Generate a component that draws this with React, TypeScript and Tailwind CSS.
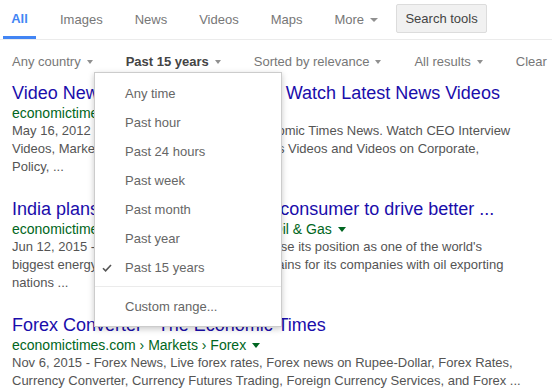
const tabs = ["Images", "News", "Videos", "Maps"];

const ranges = [
  "Any time",
  "Past hour",
  "Past 24 hours",
  "Past week",
  "Past month",
  "Past year",
  "Past 15 years",
];

function Caret({ className = "border-l-[3px] border-r-[3px] border-t-[4px] border-t-[#909090]" }: { className?: string }) {
  return (
    <span className={`inline-block w-0 h-0 border-l-transparent border-r-transparent ${className}`} />
  );
}

function Result({
  title,
  url,
  lines,
}: {
  title: string;
  url: string;
  lines: string[];
}) {
  return (
    <div className="mb-[23px]">
      <div className="text-[18px] leading-[21px] text-[#1a0dab] whitespace-nowrap">{title}</div>
      <div className="text-[14px] leading-[18px] text-[#006621] whitespace-nowrap flex items-center gap-[6px]">
        <span>{url}</span>
        <Caret className="border-t-[#006621] border-l-[4px] border-r-[4px] border-t-[5px]" />
      </div>
      {lines.map((l, i) => (
        <div key={i} className="text-[13px] leading-[18px] text-[#545454] whitespace-nowrap">
          {l}
        </div>
      ))}
    </div>
  );
}

export default function App() {
  return (
    <div
      className="relative w-[552px] h-[392px] overflow-hidden bg-white"
      style={{ fontFamily: '"Liberation Sans", Arial, sans-serif' }}
    >
      {/* tabs */}
      <div className="h-[40px] border-b border-[#ebebeb] flex items-stretch pl-[3px] text-[13px] text-[#777]">
        <div className="w-[33px] pt-[2px] flex items-center justify-center border-b-[3px] border-[#4285f4] text-[#4285f4] font-bold">
          All
        </div>
        <div className="ml-[24px] flex items-center gap-[32px]">
          {tabs.map((t) => (
            <span key={t}>{t}</span>
          ))}
          <span className="flex items-center gap-[6px]">
            More
            <Caret className="border-l-[4px] border-r-[4px] border-t-[4px] border-t-[#909090]" />
          </span>
        </div>
        <div className="ml-[18px] mt-[4px] self-start h-[29px] w-[91px] flex items-center justify-center bg-[#f1f1f1] border border-[#dcdcdc] rounded-[2px] text-[#444]">
          Search tools
        </div>
      </div>

      {/* filters */}
      <div className="h-[43px] flex items-center pl-[12px] gap-[33px] text-[13px] text-[#777] whitespace-nowrap">
        <span className="flex items-center gap-[6px]">
          Any country <Caret />
        </span>
        <span className="flex items-center gap-[6px] font-bold text-[#444]">
          Past 15 years <Caret />
        </span>
        <span className="flex items-center gap-[6px]">
          Sorted by relevance <Caret />
        </span>
        <span className="flex items-center gap-[6px]">
          All results <Caret />
        </span>
        <span>Clear</span>
      </div>

      {/* results */}
      <div className="px-[12px]">
        <Result
          title="Video News: Economic Times TV, Watch Latest News Videos"
          url="economictimes.indiatimes.com"
          lines={[
            "May 16, 2012 - Watch latest videos from Economic Times News. Watch CEO Interview",
            "Videos, Market Videos, Business Videos, News Videos and Videos on Corporate,",
            "Policy, ...",
          ]}
        />
        <Result
          title="India plans to leverage its role as consumer to drive better ..."
          url="economictimes.indiatimes.com › Energy › Oil & Gas"
          lines={[
            "Jun 12, 2015 - India, as a buyer, is looking to use its position as one of the world's",
            "biggest energy consumers to secure greater gains for its companies with oil exporting",
            "nations ...",
          ]}
        />
        <Result
          title="Forex Converter - The Economic Times"
          url="economictimes.com › Markets › Forex"
          lines={[
            "Nov 6, 2015 - Forex News, Live forex rates, Forex news on Rupee-Dollar, Forex Rates,",
            "Currency Converter, Currency Futures Trading, Foreign Currency Services, and Forex ...",
          ]}
        />
      </div>

      {/* time range menu */}
      <div className="absolute left-[94px] top-[72px] w-[188px] bg-white border border-[rgba(0,0,0,0.2)] shadow-[0_2px_6px_rgba(0,0,0,0.22)] pt-[6px] pb-[5px] text-[13px] text-[#666]">
        {ranges.map((r) => (
          <div key={r} className="h-[29px] flex items-center pl-[7px]">
            <span className="w-[23px] flex items-center">
              {r === "Past 15 years" && (
                <svg width="10" height="8" viewBox="0 0 10 8">
                  <path d="M1 4.2 L3.6 6.8 L9 1" fill="none" stroke="#555" strokeWidth="1.6" />
                </svg>
              )}
            </span>
            {r}
          </div>
        ))}
        <div className="mt-[4px] mb-[5px] h-px bg-[#ebebeb]" />
        <div className="h-[29px] flex items-center pl-[30px]">Custom range...</div>
      </div>
    </div>
  );
}
